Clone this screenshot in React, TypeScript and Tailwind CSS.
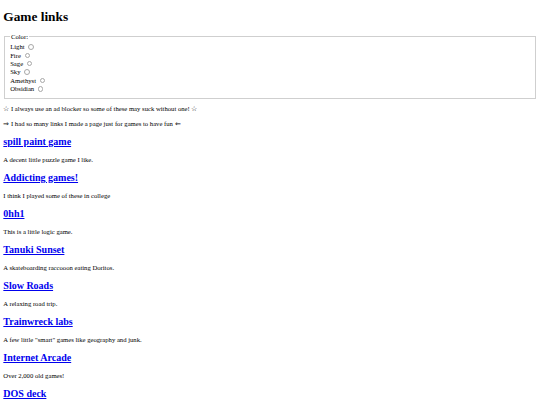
import React from 'react';

const colors = ['Light', 'Fire', 'Sage', 'Sky', 'Amethyst', 'Obsidian'];

const games = [
  { title: 'spill paint game', text: 'A decent little puzzle game I like.' },
  { title: 'Addicting games!', text: 'I think I played some of these in college' },
  { title: '0hh1', text: 'This is a little logic game.' },
  { title: 'Tanuki Sunset', text: 'A skateboarding raccooon eating Doritos.' },
  { title: 'Slow Roads', text: 'A relaxing road trip.' },
  { title: 'Trainwreck labs', text: 'A few little "smart" games like geography and junk.' },
  { title: 'Internet Arcade', text: 'Over 2,000 old games!' },
  { title: 'DOS deck', text: '' },
];

export default function App() {
  return (
    <div className="min-h-screen bg-white px-[3.33px] pb-[3.33px] text-black text-[6.67px] leading-[1.15] font-['Liberation_Serif','Times_New_Roman',serif]">
      <h1 className="text-[13.33px] font-bold my-[8.93px]">Game links</h1>

      <fieldset className="mx-[0.83px] border border-[#cfcfcf] px-[5px] pt-[2.33px] pb-[4.17px]">
        <legend className="px-[0.83px]">Color:</legend>
        <div className="leading-[8.4px]">
          {colors.map((c) => (
            <React.Fragment key={c}>
              <label>
                {c}{' '}
                <input
                  type="radio"
                  name="color"
                  className="appearance-none inline-block w-[5.4px] h-[5.4px] rounded-full border-[0.7px] border-[#a8a8a8] bg-white mr-[1.25px] ml-[2.08px] align-[-0.5px]"
                />
              </label>
              <br />
            </React.Fragment>
          ))}
        </div>
      </fieldset>

      <p className="my-[6.67px]">☆ I always use an ad blocker so some of these may suck without one! ☆</p>
      <p className="mt-[6.67px] mb-[7.2px]">⇒ I had so many links I made a page just for games to have fun ⇐</p>

      {games.map((g) => (
        <React.Fragment key={g.title}>
          <h2 className="text-[10px] font-bold my-[8.42px]">
            <a href="#" className="text-[#0000ee] underline">{g.title}</a>
          </h2>
          {g.text && <p className="my-[6.67px]">{g.text}</p>}
        </React.Fragment>
      ))}
    </div>
  );
}
